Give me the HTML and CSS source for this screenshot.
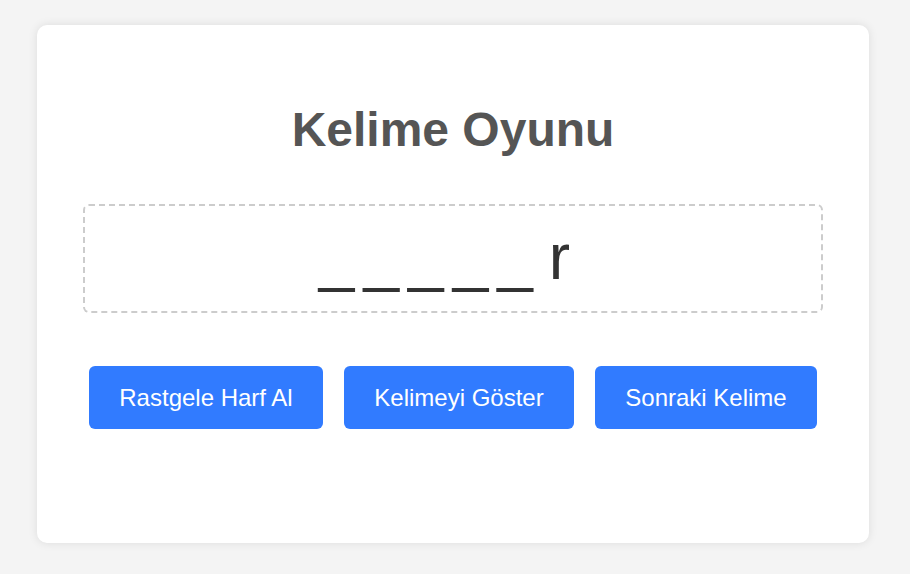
FILE: index.html
```html
<!DOCTYPE html>
<html lang="tr">
<head>
<meta charset="utf-8">
<title>Kelime Oyunu</title>
<link rel="stylesheet" href="styles.css">
</head>
<body>
<div class="card">
  <h1 class="title">Kelime Oyunu</h1>
  <div class="word">_____<span class="letter">r</span></div>
  <div class="actions">
    <button class="btn btn-1">Rastgele Harf Al</button>
    <button class="btn btn-2">Kelimeyi Göster</button>
    <button class="btn btn-3">Sonraki Kelime</button>
  </div>
</div>
</body>
</html>
```
FILE: styles.css
```css
html, body {
  margin: 0;
  padding: 0;
}
body {
  background: #f4f4f4;
  font-family: "Liberation Sans", Arial, sans-serif;
  padding: 25px 0 0 37px;
  height: 574px;
  box-sizing: border-box;
}
.card {
  box-sizing: border-box;
  width: 832px;
  height: 518px;
  background: #fff;
  border-radius: 10px;
  box-shadow: 0 0 10px rgba(0, 0, 0, 0.1);
  padding: 78px 46px 0 46px;
  display: flex;
  flex-direction: column;
  align-items: stretch;
}
.title {
  margin: 0;
  font-size: 48px;
  font-weight: bold;
  color: #555;
  text-align: center;
  line-height: 54px;
}
.word {
  margin-top: 47px;
  height: 109px;
  box-sizing: border-box;
  border: 2px dashed #ccc;
  border-radius: 6px;
  padding: 15px 8px 0 0;
  font-size: 64px;
  line-height: 72px;
  color: #333;
  text-align: center;
  letter-spacing: 9px;
}
.letter {
  margin-left: 7px;
}
.actions {
  margin-top: 53px;
  display: flex;
  justify-content: center;
  gap: 21px;
}
.btn {
  height: 63px;
  box-sizing: border-box;
  border: none;
  border-radius: 6px;
  background: #317bff;
  color: #fff;
  font-family: "Liberation Sans", Arial, sans-serif;
  font-size: 24px;
  padding: 0;
}
.btn-1 { width: 234px; }
.btn-2 { width: 230px; }
.btn-3 { width: 222px; }
```
